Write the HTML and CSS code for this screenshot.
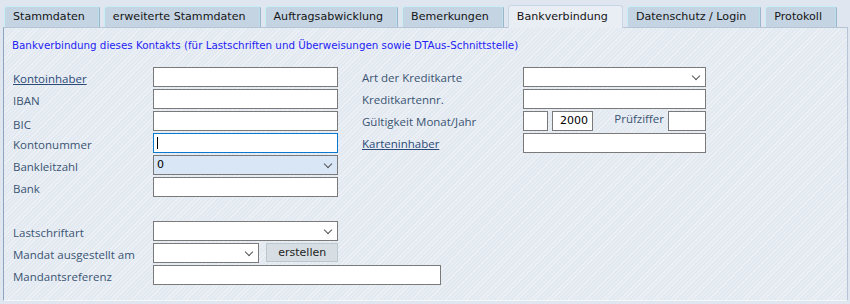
FILE: index.html
```html
<!DOCTYPE html>
<html lang="de">
<head>
    <meta charset="UTF-8">
    <meta name="viewport" content="width=device-width, initial-scale=1.0">
    <title>Kontakt - Bankverbindung</title>
    <link rel="stylesheet" href="styles.css">
</head>
<body>
    <div class="tabs">
        <div class="tab">Stammdaten</div>
        <div class="tab">erweiterte Stammdaten</div>
        <div class="tab">Auftragsabwicklung</div>
        <div class="tab">Bemerkungen</div>
        <div class="tab active">Bankverbindung</div>
        <div class="tab">Datenschutz / Login</div>
        <div class="tab">Protokoll</div>
    </div>

    <div class="panel">
        <p class="intro">Bankverbindung dieses Kontakts (für Lastschriften und Überweisungen sowie DTAus-Schnittstelle)</p>

        <div class="form">
            <!-- Zeile 1 -->
            <label class="lbl left link">Kontoinhaber</label>
            <div class="field"></div>
            <label class="lbl right">Art der Kreditkarte</label>
            <div class="field combo"><span class="chev"></span></div>

            <!-- Zeile 2 -->
            <label class="lbl left">IBAN</label>
            <div class="field"></div>
            <label class="lbl right">Kreditkartennr.</label>
            <div class="field"></div>

            <!-- Zeile 3 -->
            <label class="lbl left low">BIC</label>
            <div class="field"></div>
            <label class="lbl right">Gültigkeit Monat/Jahr</label>
            <div class="expiry">
                <div class="field month"></div>
                <div class="field year">2000</div>
                <span class="lbl check">Prüfziffer</span>
                <div class="field digit"></div>
            </div>

            <!-- Zeile 4 -->
            <label class="lbl left">Kontonummer</label>
            <div class="field focus"><span class="caret"></span></div>
            <label class="lbl right link">Karteninhaber</label>
            <div class="field"></div>

            <!-- Zeile 5 -->
            <label class="lbl left">Bankleitzahl</label>
            <div class="field combo selected">0<span class="chev"></span></div>

            <!-- Zeile 6 -->
            <label class="lbl left">Bank</label>
            <div class="field"></div>

            <div class="spacer"></div>

            <label class="lbl left">Lastschriftart</label>
            <div class="field combo"><span class="chev"></span></div>

            <label class="lbl left">Mandat ausgestellt am</label>
            <div class="mandate">
                <div class="field combo date"><span class="chev"></span></div>
                <button class="btn">erstellen</button>
            </div>

            <label class="lbl left">Mandantsreferenz</label>
            <div class="field wide"></div>
        </div>
    </div>
</body>
</html>
```

FILE: styles.css
```css
body {
    margin: 0;
    height: 304px;
    overflow: hidden;
    background: #dfe6ef;
    font-family: "DejaVu Sans", Verdana, sans-serif;
}
.tabs {
    display: flex;
    gap: 4px;
    padding: 6px 0 0 4px;
    height: 21px;
    align-items: flex-end;
}
.tab {
    height: 20px;
    line-height: 20px;
    padding: 0 14px 0 8px;
    font-size: 11.1px;
    color: #151515;
    background: #c4d4e3;
    border: 1px solid #9fb4c8;
    border-top-color: #c8eef5;
    border-left-color: #c8eef5;
    border-bottom: none;
    border-radius: 3px 3px 0 0;
    box-shadow: inset -1px 0 0 #b9e3ec;
}
.tab.active {
    height: 22px;
    line-height: 22px;
    margin-bottom: -1px;
    background: #e9eef4;
    border-color: #c7d6e4;
    box-shadow: none;
    position: relative;
    z-index: 1;
}
.panel {
    margin: 0 2px 0 3px;
    height: 272px;
    border: 1px solid #b6c4d6;
    border-left-color: #8fa4bf;
    border-bottom-color: #f4f7fa;
    background-color: #e3e9f1;
    background-image: repeating-linear-gradient(135deg, rgba(255,255,255,0.35) 0 1px, transparent 1px 3px);
}
.intro {
    margin: 0;
    padding: 11px 0 0 8px;
    height: 18px;
    font-size: 10.3px;
    color: #2323f5;
}
.form {
    display: grid;
    grid-template-columns: 140px 185px 24px 161px 183px;
    grid-auto-rows: 20px;
    row-gap: 2px;
    padding: 10px 0 0 9px;
    font-family: "Open Sans", "Liberation Sans", sans-serif;
}
.lbl {
    font-size: 11.5px;
    color: #3a5472;
    align-self: center;
    white-space: nowrap;
}
.lbl.left {
    grid-column: 1;
    padding-top: 3px;
}
.lbl.low {
    padding-top: 7px;
}
.lbl.right {
    grid-column: 4;
    padding-top: 1px;
}
.lbl.link {
    color: #2b4a78;
    text-decoration: underline;
}
.field {
    box-sizing: border-box;
    height: 20px;
    background: #fff;
    border: 1px solid #7a7a7a;
    position: relative;
    font-family: "DejaVu Sans", sans-serif;
    font-size: 11px;
    line-height: 18px;
    color: #000;
}
.field.focus {
    border-color: #0b78d0;
}
.caret {
    position: absolute;
    left: 3px;
    top: 3px;
    width: 1px;
    height: 12px;
    background: #000;
}
.field.combo.selected {
    background: #d8e6f6;
    padding-left: 3px;
}
.chev {
    position: absolute;
    right: 6px;
    top: 5px;
    width: 5px;
    height: 5px;
    border-right: 1px solid #555;
    border-bottom: 1px solid #555;
    transform: rotate(45deg);
}
.expiry {
    display: flex;
    align-items: center;
}
.field.month {
    width: 25px;
}
.field.year {
    width: 41px;
    margin-left: 4px;
    text-align: right;
    padding-right: 4px;
}
.lbl.check {
    margin-left: auto;
    align-self: flex-start;
    padding-top: 0;
}
.field.digit {
    width: 38px;
    margin-left: 4px;
}
.spacer {
    grid-column: 1 / -1;
    height: 23px;
}
.mandate {
    display: flex;
    gap: 7px;
}
.field.date {
    width: 107px;
}
.btn {
    box-sizing: border-box;
    width: 72px;
    height: 19px;
    padding: 0;
    font-family: "DejaVu Sans", sans-serif;
    font-size: 11px;
    color: #222;
    background: #d6dee3;
    border: 1px solid #bcc8cf;
    border-radius: 0;
}
.field.wide {
    grid-column: 2 / 5;
    width: 288px;
}
```
